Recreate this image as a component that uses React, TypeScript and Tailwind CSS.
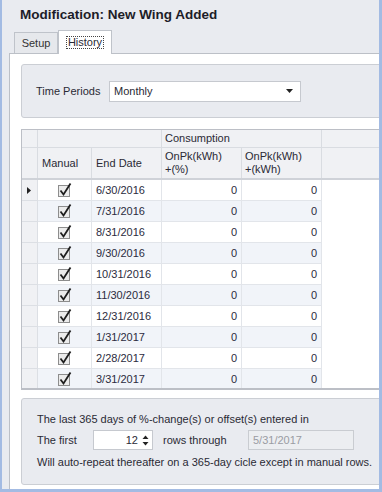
const rows = [
  '6/30/2016',
  '7/31/2016',
  '8/31/2016',
  '9/30/2016',
  '10/31/2016',
  '11/30/2016',
  '12/31/2016',
  '1/31/2017',
  '2/28/2017',
  '3/31/2017',
];

function CheckMark() {
  return (
    <svg width="16" height="16" viewBox="0 0 16 16">
      <rect x="1.5" y="3.5" width="11" height="11" fill="#ececec" stroke="#8d8d8d" />
      <path d="M3.5 8.5 L6.5 12.5 L13.5 1.5" fill="none" stroke="#1e1e1e" strokeWidth="1.8" />
    </svg>
  );
}

function GridRow({ date, index }: { date: string; index: number }) {
  const shade = index % 2 === 1 ? 'bg-[#f1f4f9]' : 'bg-white';
  return (
    <div className="flex h-[21px] shrink-0 text-[#2b2b40]">
      <div className="w-[16px] shrink-0 border-r border-b border-[#dcdfe4] bg-[#f0f1f4] flex items-center justify-center">
        {index === 0 && (
          <svg width="5" height="7" viewBox="0 0 5 7">
            <path d="M0 0 L4 3.5 L0 7 Z" fill="#222" />
          </svg>
        )}
      </div>
      <div className={`w-[54px] shrink-0 border-r border-b border-[#e2e5ea] flex items-center justify-center ${shade}`}>
        <CheckMark />
      </div>
      <div className={`w-[70px] shrink-0 border-r border-b border-[#e2e5ea] flex items-center pl-[4px] ${shade}`}>
        {date}
      </div>
      <div className={`w-[80px] shrink-0 border-r border-b border-[#e2e5ea] flex items-center justify-end pr-[4px] ${shade}`}>
        0
      </div>
      <div className={`w-[80px] shrink-0 border-r border-b border-[#e2e5ea] flex items-center justify-end pr-[4px] ${shade}`}>
        0
      </div>
      <div className="flex-1 bg-white" />
    </div>
  );
}

export default function App() {
  return (
    <div
      className="w-[382px] h-[492px] bg-[#e9ebf0] border-l-2 border-r-[3px] border-b-[3px] border-[#a3bbe3] flex flex-col overflow-hidden text-[11px] text-[#2a2a35]"
      style={{ fontFamily: '"Liberation Sans", Arial, sans-serif' }}
    >
      <div className="h-[31px] shrink-0 pl-[18px] pt-[6px] text-[13.5px] leading-[18px] font-bold text-[#1d1d28]">
        Modification: New Wing Added
      </div>

      <div className="h-[22px] shrink-0 flex items-end pl-[12px] relative z-10">
        <div className="w-[44px] h-[21px] border border-b-0 border-[#bfc3ca] bg-[#e6e8ec] flex items-center justify-center text-[#333]">
          Setup
        </div>
        <div className="w-[54px] h-[24px] -mb-[1px] border border-b-0 border-[#bfc3ca] bg-white flex items-center justify-center">
          <span className="border border-dotted border-[#444] px-[1px] leading-[11px] h-[13px]">History</span>
        </div>
      </div>

      <div className="flex-1 ml-[7px] border-l border-t border-[#bcc0c7] bg-white pl-[11px] pt-[10px] pb-[5px] flex flex-col overflow-hidden">
        <div className="w-[370px] h-[54px] shrink-0 rounded-[3px] border border-[#cbced4] bg-[#e9ebf0] flex items-center pl-[14px]">
          <span className="w-[73px] pt-[1px]">Time Periods</span>
          <div className="w-[192px] h-[21px] border border-[#c6c9cf] bg-white flex items-center pl-[4px] pr-[7px] justify-between">
            <span>Monthly</span>
            <svg width="7" height="4" viewBox="0 0 7 4">
              <path d="M0 0 L7 0 L3.5 4 Z" fill="#222" />
            </svg>
          </div>
        </div>

        <div className="w-[370px] h-[261px] shrink-0 mt-[11px] border border-[#bcbfc6] border-b-2 flex flex-col overflow-hidden">
          <div className="flex h-[18px] shrink-0 bg-[#f0f1f4] border-b border-[#d9dce1]">
            <div className="w-[16px] shrink-0 border-r border-[#d9dce1]" />
            <div className="w-[124px] shrink-0 border-r border-[#d9dce1]" />
            <div className="w-[160px] shrink-0 border-r border-[#d9dce1] flex items-center pl-[3px]">Consumption</div>
            <div className="flex-1" />
          </div>
          <div className="flex h-[32px] shrink-0 bg-[#f0f1f4] border-b-2 border-[#cfd2d8]">
            <div className="w-[16px] shrink-0 border-r border-[#d9dce1]" />
            <div className="w-[54px] shrink-0 border-r border-[#d9dce1] flex items-center pl-[4px]">Manual</div>
            <div className="w-[70px] shrink-0 border-r border-[#d9dce1] flex items-center pl-[4px]">End Date</div>
            <div className="w-[80px] shrink-0 border-r border-[#d9dce1] flex flex-col justify-center pl-[3px] leading-[13px]">
              <span>OnPk(kWh)</span>
              <span>+(%)</span>
            </div>
            <div className="w-[80px] shrink-0 border-r border-[#d9dce1] flex flex-col justify-center pl-[3px] leading-[13px]">
              <span>OnPk(kWh)</span>
              <span>+(kWh)</span>
            </div>
            <div className="flex-1" />
          </div>
          {rows.map((d, i) => (
            <GridRow key={d} date={d} index={i} />
          ))}
          <div className="flex-1 flex">
            <div className="w-[16px] bg-[#f0f1f4] border-r border-[#dcdfe4]" />
            <div className="flex-1 bg-white" />
          </div>
        </div>

        <div className="w-[370px] h-[87px] shrink-0 mt-[8px] rounded-[3px] border border-[#cbced4] bg-[#e9ebf0] flex flex-col pl-[15px] pt-[13px]">
          <div className="h-[14px] leading-[14px]">The last 365 days of %-change(s) or offset(s) entered in</div>
          <div className="flex items-center h-[20px] mt-[4px]">
            <span className="w-[56px]">The first</span>
            <div className="w-[60px] h-[20px] border border-[#c6c9cf] bg-white flex items-center justify-end pr-[3px]">
              <span className="mr-[4px]">12</span>
              <svg width="7" height="13" viewBox="0 0 7 13">
                <path d="M0.5 5 L3.5 1.5 L6.5 5 Z" fill="#222" />
                <path d="M0.5 8 L3.5 11.5 L6.5 8 Z" fill="#222" />
              </svg>
            </div>
            <span className="ml-[10px] w-[85px]">rows through</span>
            <div className="w-[106px] h-[20px] border border-[#c9ccd1] bg-[#eceef1] flex items-center pl-[4px] text-[#9a9ca3]">
              5/31/2017
            </div>
          </div>
          <div className="h-[14px] leading-[14px] mt-[5px]">Will auto-repeat thereafter on a 365-day cicle except in manual rows.</div>
        </div>
      </div>
    </div>
  );
}
